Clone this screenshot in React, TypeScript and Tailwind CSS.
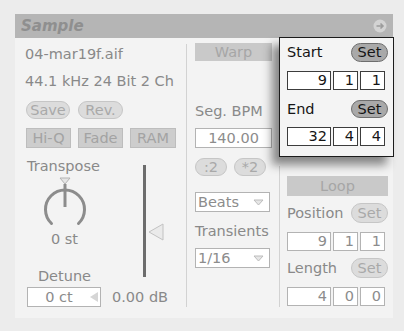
import React from 'react';

// faded device panel with the Start/End section highlighted

const Pill = ({ label, dark, className = '' }: { label: string; dark?: boolean; className?: string }) => (
  <div
    className={`flex h-[18px] items-center justify-center rounded-full border leading-none ${
      dark
        ? 'border-[#6e6e6e] bg-[#a9a9a9] text-[#151515]'
        : 'border-[#c6c6c6] bg-[#dcdcdc] text-[#a9a9a9]'
    } ${className}`}
  >
    {label}
  </div>
);

const Toggle = ({ label, className = '' }: { label: string; className?: string }) => (
  <div
    className={`flex h-[20px] items-center justify-center border border-[#bdbdbd] bg-[#cdcdcd] leading-none text-[#a3a3a3] ${className}`}
  >
    {label}
  </div>
);

const Field = ({ value, dark, className = '' }: { value: string; dark?: boolean; className?: string }) => (
  <div
    className={`flex h-[19px] items-center justify-end border bg-white pr-[3px] leading-none ${
      dark ? 'border-[#3c3c3c] text-[#151515]' : 'border-[#b3b3b3] text-[#8c8c8c]'
    } ${className}`}
  >
    {value}
  </div>
);

const BarsField = ({ values, dark }: { values: string[]; dark?: boolean }) => (
  <div className="flex gap-[2px]">
    <Field value={values[0]} dark={dark} className="w-[44px]" />
    <Field value={values[1]} dark={dark} className="w-[25px]" />
    <Field value={values[2]} dark={dark} className="w-[25px]" />
  </div>
);

const Dropdown = ({ label }: { label: string }) => (
  <div className="flex h-[20px] w-[75px] items-center justify-between border border-[#b3b3b3] bg-white pl-[2px] pr-[5px] leading-none text-[#8c8c8c]">
    <span>{label}</span>
    <svg width="11" height="7" viewBox="0 0 11 7">
      <path d="M1 1 L10 1 L5.5 6 Z" fill="#e6e6e6" stroke="#bcbcbc" strokeWidth="1" />
    </svg>
  </div>
);

const Knob = () => (
  <svg width="48" height="56" viewBox="0 0 48 56">
    <path d="M19 2 L29 2 L24 8 Z" fill="#e4e4e4" stroke="#b2b2b2" strokeWidth="1" />
    <path
      d="M10.5 47.5 A19.5 19.5 0 1 1 37.5 47.5"
      fill="none"
      stroke="#8c8c8c"
      strokeWidth="3"
      strokeLinecap="round"
    />
    <line x1="24" y1="8" x2="24" y2="31" stroke="#8c8c8c" strokeWidth="3" />
  </svg>
);

export default function App() {
  return (
    <div className="h-[331px] w-[404px] bg-[#ececec] pl-[15px] pt-[14px] font-['DejaVu_Sans',sans-serif] text-[14.5px] text-[#898989]">
      <div className="flex h-[304px] w-[378px] flex-col bg-[#f3f3f3]">
        <div className="flex h-[28px] items-center justify-between bg-[#b5b5b5] pl-[6px] pr-[6px]">
          <span className="text-[15px] font-bold italic text-[#8f8f8f]">Sample</span>
          <svg width="14" height="14" viewBox="0 0 14 14">
            <circle cx="7" cy="7" r="6.5" fill="#d3d3d3" />
            <path d="M3.5 7 H10 M7.5 4.5 L10 7 L7.5 9.5" stroke="#9c9c9c" strokeWidth="1.6" fill="none" />
          </svg>
        </div>

        <div className="flex flex-1">
          {/* left column */}
          <div className="mb-[11px] mt-[6px] flex w-[172px] flex-col border-r border-[#d2d2d2] pl-[10px]">
            <div className="mt-[1px] leading-[18px]">04-mar19f.aif</div>
            <div className="mt-[9px] leading-[18px]">44.1 kHz 24 Bit 2 Ch</div>
            <div className="ml-[1px] mt-[11px] flex gap-[8px]">
              <Pill label="Save" className="w-[44px]" />
              <Pill label="Rev." className="w-[45px]" />
            </div>
            <div className="ml-[1px] mt-[9px] flex gap-[7px]">
              <Toggle label="Hi-Q" className="w-[45px]" />
              <Toggle label="Fade" className="w-[45px]" />
              <Toggle label="RAM" className="w-[46px]" />
            </div>
            <div className="ml-[2px] mt-[9px] flex">
              <div className="flex w-[75px] flex-col items-center">
                <div className="self-start leading-[18px]">Transpose</div>
                <div className="mt-[1px]">
                  <Knob />
                </div>
                <div className="mt-[-2px] leading-[18px]">0 st</div>
                <div className="mt-[19px] leading-[18px]">Detune</div>
              </div>
              <div className="ml-[41px] mt-[8px] flex">
                <div className="h-[112px] w-[3px] bg-[#6c6c6c]" />
                <svg className="ml-[2px] mt-[58px]" width="16" height="18" viewBox="0 0 16 18">
                  <path d="M1 9 L15 1 L15 17 Z" fill="#eaeaea" stroke="#c2c2c2" strokeWidth="1" />
                </svg>
              </div>
            </div>
            <div className="ml-[2px] mt-[2px] flex items-center">
              <div className="relative flex h-[20px] w-[74px] items-center justify-center border border-[#b3b3b3] bg-white pr-[10px] leading-none text-[#8c8c8c]">
                0 ct
                <svg className="absolute right-[1px] top-[3px]" width="10" height="12" viewBox="0 0 10 12">
                  <path d="M1 6 L9 1 L9 11 Z" fill="#d6d6d6" />
                </svg>
              </div>
              <span className="ml-[11px] leading-none">0.00 dB</span>
            </div>
          </div>

          {/* middle column */}
          <div className="flex w-[92px] flex-col pl-[8px] pr-[7px]">
            <div className="mt-[5px] flex h-[18px] items-center justify-center bg-[#c9c9c9] leading-none text-[#a6a6a6]">
              Warp
            </div>
            <div className="mt-[41px] whitespace-nowrap leading-[18px]">Seg. BPM</div>
            <div className="mt-[8px] flex h-[20px] items-center justify-center border border-[#b3b3b3] bg-white leading-none text-[#8c8c8c]">
              140.00
            </div>
            <div className="mt-[10px] flex gap-[7px]">
              <Pill label=":2" className="h-[16px] w-[32px]" />
              <Pill label="*2" className="h-[16px] w-[32px]" />
            </div>
            <div className="mt-[16px]">
              <Dropdown label="Beats" />
            </div>
            <div className="mt-[10px] leading-[18px]">Transients</div>
            <div className="mt-[8px]">
              <Dropdown label="1/16" />
            </div>
          </div>

          {/* right column */}
          <div className="-mr-px flex w-[115px] flex-col">
            <div className="relative z-10 mt-[-1px] h-[120px] border-[1.5px] border-[#1c1c1c] bg-[#f4f4f4] pl-[7px] pr-[5px] text-[#151515] shadow-[-7px_8px_9px_rgba(0,0,0,0.45)]">
              <div className="mt-[5px] flex h-[19px] items-center justify-between">
                <span className="leading-none">Start</span>
                <Pill label="Set" dark className="h-[19px] w-[37px]" />
              </div>
              <div className="mt-[9px]">
                <BarsField values={['9', '1', '1']} dark />
              </div>
              <div className="mt-[10px] flex h-[18px] items-center justify-between">
                <span className="leading-none">End</span>
                <Pill label="Set" dark className="h-[18px] w-[37px]" />
              </div>
              <div className="mt-[9px]">
                <BarsField values={['32', '4', '4']} dark />
              </div>
            </div>
            <div className="mb-[11px] mt-[9px] flex flex-1 flex-col border-l border-[#d2d2d2] pl-[7px] pr-[6px]">
              <div className="mt-[10px] flex h-[20px] items-center justify-center bg-[#c9c9c9] leading-none text-[#a6a6a6]">
                Loop
              </div>
              <div className="mt-[7px] flex h-[20px] items-center justify-between">
                <span className="leading-none">Position</span>
                <Pill label="Set" className="h-[20px] w-[37px]" />
              </div>
              <div className="mt-[9px]">
                <BarsField values={['9', '1', '1']} />
              </div>
              <div className="mt-[7px] flex h-[20px] items-center justify-between">
                <span className="leading-none">Length</span>
                <Pill label="Set" className="h-[20px] w-[37px]" />
              </div>
              <div className="mt-[9px]">
                <BarsField values={['4', '0', '0']} />
              </div>
            </div>
          </div>
        </div>
      </div>
    </div>
  );
}
